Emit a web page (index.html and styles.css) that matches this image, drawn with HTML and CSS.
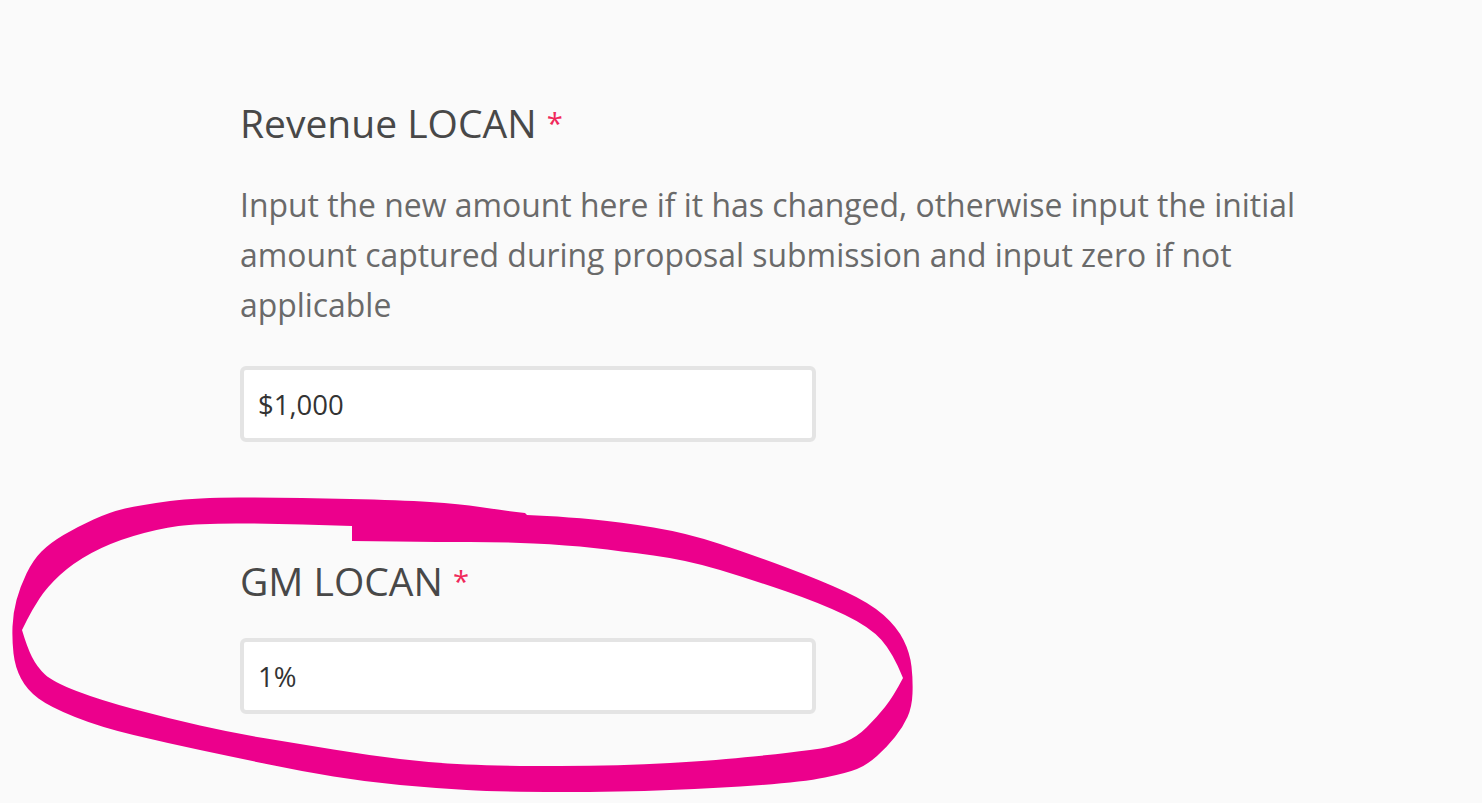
FILE: index.html
```html
<!DOCTYPE html>
<html lang="en">
<head>
    <meta charset="UTF-8">
    <meta name="viewport" content="width=device-width, initial-scale=1.0">
    <title>LOCAN</title>
    <link rel="stylesheet" href="styles.css">
</head>
<body>
    <main class="form">
        <div class="field">
            <label class="field-label" for="revenue">Revenue LOCAN <span class="required">*</span></label>
            <p class="field-help">Input the new amount here if it has changed, otherwise input the initial amount captured during proposal submission and input zero if not applicable</p>
            <input class="field-input" type="text" id="revenue" value="$1,000">
        </div>
        <div class="field">
            <label class="field-label" for="gm">GM LOCAN <span class="required">*</span></label>
            <input class="field-input" type="text" id="gm" value="1%">
        </div>
    </main>

    <!-- hand drawn marker ring over the GM field -->
    <svg class="scribble" width="1482" height="803" viewBox="0 0 1482 803">
        <path fill="#ec008c" fill-rule="evenodd" d="
            M13.5,653.5 Q12,640 12.5,626.5 Q13,613 16.5,600 Q20,587 26.5,573.5 Q33,560 41.5,551.5
            Q50,543 63.5,535 Q77,527 93.5,519.5 Q110,512 125,508.5 Q140,505 170,501 Q200,497 250,497.5
            Q300,498 350,499 Q400,500 430,502 Q460,504 480,507 Q500,510 525,513 L527,515 L547,516
            Q567,517 593.5,519.5 Q620,522 653.5,527.5 Q687,533 720,544 Q753,555 786.5,567.5 Q820,580 845,591.5
            Q870,603 883.5,615 Q897,627 903.5,640 Q910,653 911.5,666.5 Q913,680 912.5,693.5 Q912,707 907.5,717
            Q903,727 895,737 Q887,747 877,756 Q867,765 857,769 Q847,773 825,777.5 Q803,782 761.5,785
            Q720,788 670,790 Q620,792 560,792 Q500,792 466.5,790 Q433,788 400,785 Q367,782 333.5,776.5
            Q300,771 266.5,764 Q233,757 200,750 Q167,743 133.5,735 Q100,727 75,717 Q50,707 38.5,698.5
            Q27,690 21,678.5 Q15,667 13.5,653.5 Z
            M22,630 L27,620 Q32,610 39.5,598.5 Q47,587 60,575 Q73,563 91.5,553 Q110,543 133.5,536
            Q157,529 178.5,526 Q200,523 250,523.5 Q300,524 352,526 L352,541 L396,541.5 Q440,542 470,542
            Q500,542 533.5,543.5 Q567,545 593.5,548 Q620,551 653.5,555.5 Q687,560 720,570 Q753,580 786.5,591.5
            Q820,603 845,615 Q870,627 881.5,640 Q893,653 903,678 Q893,697 885,707 Q877,717 867,727
            Q857,737 845,742 Q833,747 810,750 Q787,753 753.5,756.5 Q720,760 670,763 Q620,766 560,766
            Q500,766 466.5,764.5 Q433,763 400,759 Q367,755 333.5,749.5 Q300,744 266.5,738.5 Q233,733 200,725.5
            Q167,718 133.5,709 Q100,700 76.5,691 Q53,682 45,674.5 Q37,667 32,657 Q27,647 22,630 Z"/>
    </svg>
</body>
</html>
```

FILE: styles.css
```css
body{
    margin: 0;
    background-color: #fafafa;
    font-family: "Open Sans", "Noto Sans", sans-serif;
}

.form{
    width: 1100px;
    padding: 99px 0 0 240px;
}

.field + .field{
    margin-top: 115px;
}

.field-label{
    display: block;
    margin-bottom: 33px;
    font-size: 39px;
    line-height: 48px;
    color: #484848;
}

.required{
    font-size: 0.75em;
    vertical-align: 4px;
    color: #f0285a;
}

.field-help{
    margin: 0 0 36px;
    font-size: 31.9px;
    line-height: 50px;
    color: #6a6a6a;
}

.field-input{
    display: block;
    box-sizing: border-box;
    width: 576px;
    height: 76px;
    padding: 0 14px;
    border: 4px solid #e4e4e4;
    border-radius: 6px;
    background-color: #fff;
    font-family: inherit;
    font-size: 27.5px;
    color: #333;
    outline: none;
}

/* annotation layer, sits over the form */
.scribble{
    position: absolute;
    top: 0;
    left: 0;
    pointer-events: none;
}
```
